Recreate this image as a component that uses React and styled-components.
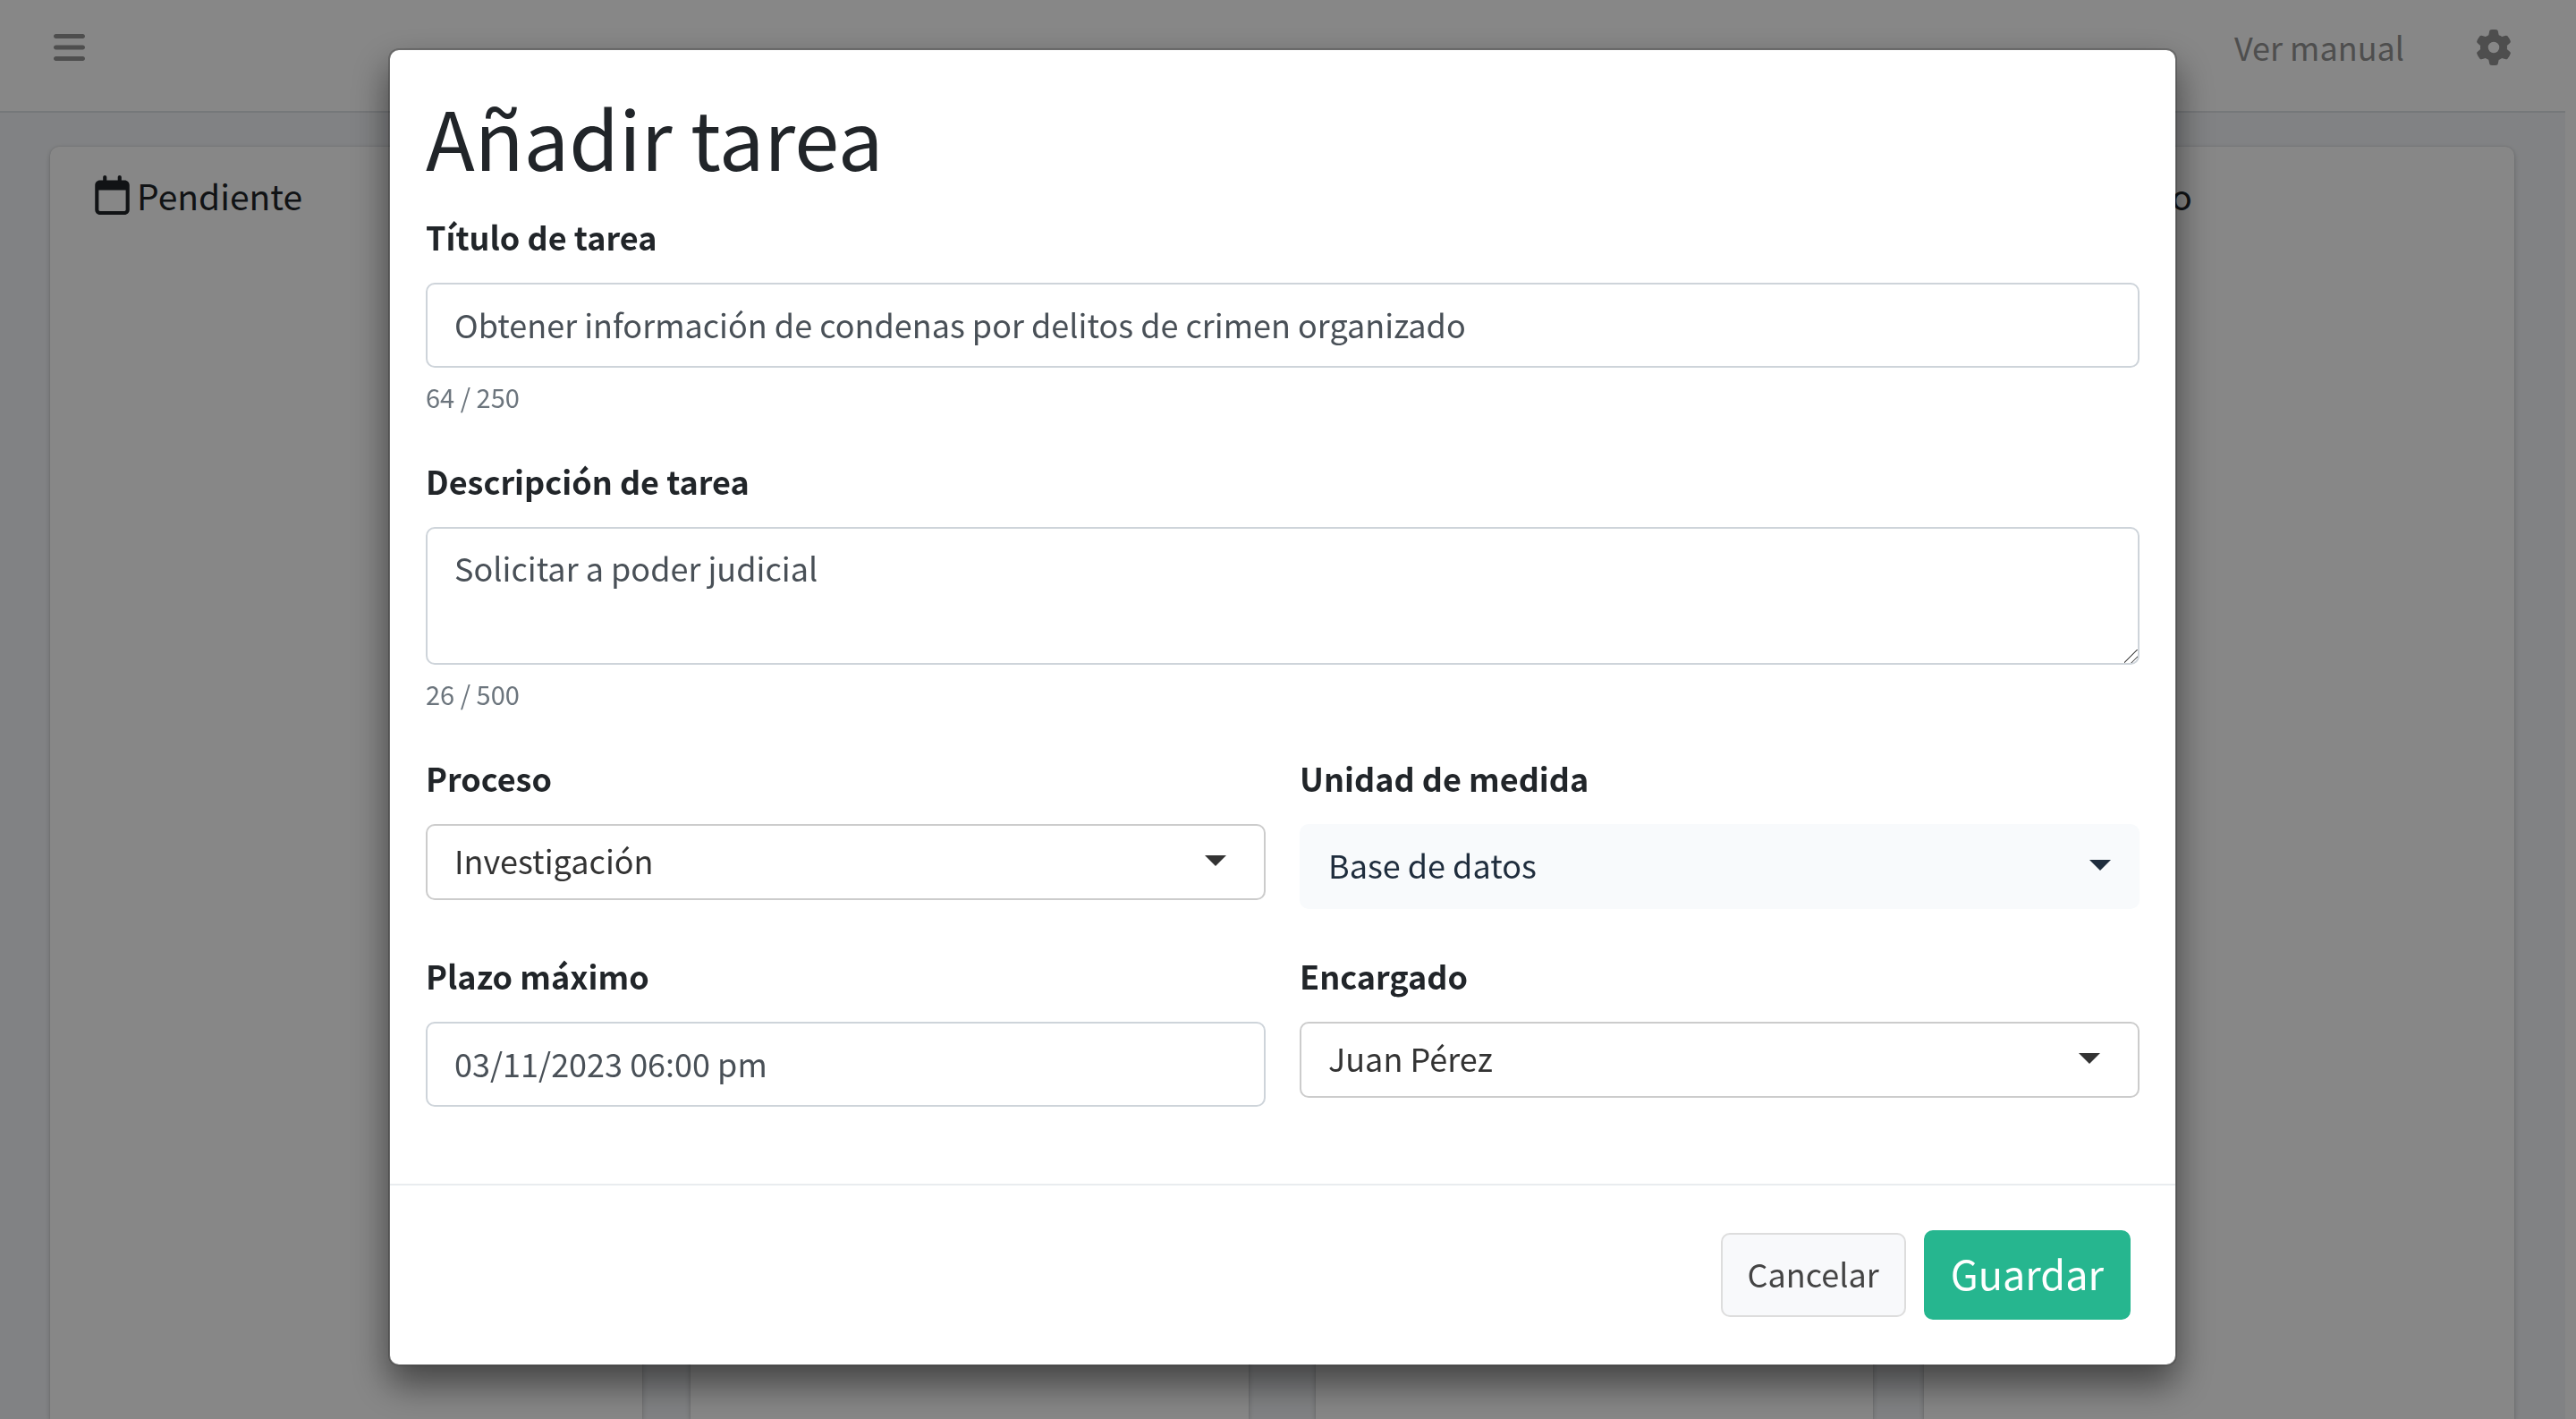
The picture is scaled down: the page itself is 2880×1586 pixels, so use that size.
import React from "react";
import styled, { createGlobalStyle } from "styled-components";
import { FaBars, FaGear, FaRegCalendar, FaRegCircleCheck } from "react-icons/fa6";

const GlobalStyle = createGlobalStyle`
  *, *::before, *::after { box-sizing: border-box; }
  body {
    margin: 0;
    background: #fff;
    color: #212529;
    font-family: "Noto Sans CJK JP", "Noto Sans", sans-serif;
    font-size: 36px;
    line-height: 60px;
  }
  button, input, select, textarea { font: inherit; margin: 0; }
`;

const Page = styled.div`
  display: flex;
  flex-direction: column;
  height: 100vh;
  padding-right: 12px;
  overflow: hidden;
`;

const Navbar = styled.header`
  display: flex;
  align-items: center;
  justify-content: space-between;
  height: 126px;
  padding: 0 60px 18px;
  background: #fff;
  border-bottom: 2px solid #dee2e6;
`;

const NavGroup = styled.nav`
  display: flex;
  align-items: center;
  gap: 80px;
`;

const NavLink = styled.a`
  padding-bottom: 2px;
  color: #939393;
  text-decoration: none;
`;

const IconButton = styled.button`
  display: flex;
  padding: 0;
  border: 0;
  background: none;
  color: #939393;

  svg {
    width: ${(p) => p.$width}px;
    height: 40px;
  }
`;

const Board = styled.main`
  display: flex;
  flex: 1;
  padding: 38px 57px 0 56px;
  background: #f4f6f9;
`;

const Column = styled.section`
  flex: ${(p) => p.$grow} 1 0;
  margin-left: ${(p) => p.$gap || 0}px;
  background: #fff;
  border-radius: 10px 10px 0 0;
  box-shadow: 0 0 2px rgba(0, 0, 0, 0.125), 0 2px 6px rgba(0, 0, 0, 0.2);
`;

const ColumnTitle = styled.h2`
  display: flex;
  align-items: center;
  gap: 8px;
  margin: 0;
  padding: 24px 50px;
  font-size: 39px;
  font-weight: 400;

  svg {
    width: ${(p) => p.$iconWidth}px;
    height: 44px;
  }
`;

const Backdrop = styled.div`
  position: fixed;
  inset: 0;
  display: flex;
  align-items: flex-start;
  justify-content: center;
  padding: 54px 12px 54px 0;
  background: rgba(0, 0, 0, 0.47);
`;

const Dialog = styled.form`
  width: 100%;
  max-width: 2000px;
  background: #fff;
  background-clip: padding-box;
  border: 2px solid rgba(0, 0, 0, 0.2);
  border-radius: 12px;
  box-shadow: 0 20px 40px rgba(0, 0, 0, 0.5);
`;

const DialogBody = styled.div`
  padding: 40px 40px 86px;
`;

const Title = styled.h1`
  margin: 0 0 28px;
  font-size: 90px;
  font-weight: 400;
  line-height: 112px;
`;

const Group = styled.div`
  display: flex;
  flex-direction: column;
  margin-bottom: ${(p) => (p.$stacked ? 40 : 0)}px;
`;

const Label = styled.label`
  margin-bottom: 24px;
  font-weight: 700;
  line-height: 56px;
`;

const Input = styled.input`
  width: 100%;
  height: 95px;
  padding: 0 30px 4px;
  color: #495057;
  background: #fff;
  border: 2px solid #ced4da;
  border-radius: 10px;
`;

const TextArea = styled.textarea`
  display: block;
  width: 100%;
  height: 154px;
  padding: 13px 30px 17px;
  color: #495057;
  background: #fff;
  border: 2px solid #ced4da;
  border-radius: 10px;
  line-height: 60px;
  resize: vertical;

  &::-webkit-resizer {
    background: linear-gradient(
      135deg,
      transparent 46%,
      #555 47%,
      #555 52%,
      transparent 53%,
      transparent 73%,
      #555 74%,
      #555 79%,
      transparent 80%
    );
  }
`;

const Hint = styled.small`
  margin-top: 8px;
  padding-bottom: 2px;
  color: #6c757d;
  font-size: 29px;
  line-height: 48px;
`;

const Fields = styled.div`
  display: grid;
  grid-template-columns: 1fr 1fr;
  gap: 46px 38px;
  align-items: start;
`;

const SelectBox = styled.div`
  position: relative;
  color: ${(p) => (p.$filled ? "#1f2d3d" : "#333")};

  &::after {
    content: "";
    position: absolute;
    top: calc(50% - 8px);
    right: ${(p) => (p.$filled ? 32 : 44)}px;
    border: 12px solid transparent;
    border-top-color: currentColor;
    border-bottom: 0;
    pointer-events: none;
  }
`;

const Select = styled.select`
  display: block;
  width: 100%;
  height: ${(p) => (p.$filled ? 95 : 85)}px;
  padding: 0 30px 6px;
  appearance: none;
  color: inherit;
  background: ${(p) => (p.$filled ? "#f8fafc" : "#fff")};
  border: 2px solid ${(p) => (p.$filled ? "#f8fafc" : "#ccc")};
  border-radius: 10px;
`;

const DialogFooter = styled.footer`
  display: flex;
  align-items: center;
  justify-content: flex-end;
  gap: 20px;
  padding: 50px;
  border-top: 2px solid #e9ecef;
`;

const Button = styled.button`
  height: ${(p) => (p.$primary ? 100 : 94)}px;
  padding: 0 28px 4px;
  color: ${(p) => (p.$primary ? "#fff" : "#444")};
  background: ${(p) => (p.$primary ? "#26b68f" : "#f8f9fb")};
  border: 2px solid ${(p) => (p.$primary ? "#26b68f" : "#ddd")};
  border-radius: 10px;
  font-size: ${(p) => (p.$primary ? 45 : 36)}px;
`;

function SelectField({ id, label, value, filled }) {
  return (
    <Group>
      <Label htmlFor={id}>{label}</Label>
      <SelectBox $filled={filled}>
        <Select id={id} defaultValue={value} $filled={filled}>
          <option>{value}</option>
        </Select>
      </SelectBox>
    </Group>
  );
}

export default function App() {
  return (
    <>
      <GlobalStyle />
      <Page>
        <Navbar>
          <IconButton type="button" aria-label="Menú" $width={35}>
            <FaBars />
          </IconButton>
          <NavGroup>
            <NavLink href="#manual">Ver manual</NavLink>
            <IconButton type="button" aria-label="Ajustes" $width={40}>
              <FaGear />
            </IconButton>
          </NavGroup>
        </Navbar>
        <Board>
          <Column $grow={662}>
            <ColumnTitle $iconWidth={39}>
              <FaRegCalendar />
              Pendiente
            </ColumnTitle>
          </Column>
          <Column $grow={624} $gap={54} />
          <Column $grow={624} $gap={75} />
          <Column $grow={660} $gap={57}>
            <ColumnTitle $iconWidth={44}>
              <FaRegCircleCheck />
              Terminado
            </ColumnTitle>
          </Column>
        </Board>
      </Page>
      <Backdrop>
        <Dialog role="dialog" aria-labelledby="dialog-title">
          <DialogBody>
            <Title id="dialog-title">Añadir tarea</Title>
            <Group $stacked>
              <Label htmlFor="titulo">Título de tarea</Label>
              <Input
                id="titulo"
                type="text"
                defaultValue="Obtener información de condenas por delitos de crimen organizado"
              />
              <Hint>64 / 250</Hint>
            </Group>
            <Group $stacked>
              <Label htmlFor="descripcion">Descripción de tarea</Label>
              <TextArea id="descripcion" rows={2} defaultValue="Solicitar a poder judicial" />
              <Hint>26 / 500</Hint>
            </Group>
            <Fields>
              <SelectField id="proceso" label="Proceso" value="Investigación" />
              <SelectField id="unidad" label="Unidad de medida" value="Base de datos" filled />
              <Group>
                <Label htmlFor="plazo">Plazo máximo</Label>
                <Input id="plazo" type="text" defaultValue="03/11/2023 06:00 pm" />
              </Group>
              <SelectField id="encargado" label="Encargado" value="Juan Pérez" />
            </Fields>
          </DialogBody>
          <DialogFooter>
            <Button type="button">Cancelar</Button>
            <Button type="submit" $primary>
              Guardar
            </Button>
          </DialogFooter>
        </Dialog>
      </Backdrop>
    </>
  );
}
